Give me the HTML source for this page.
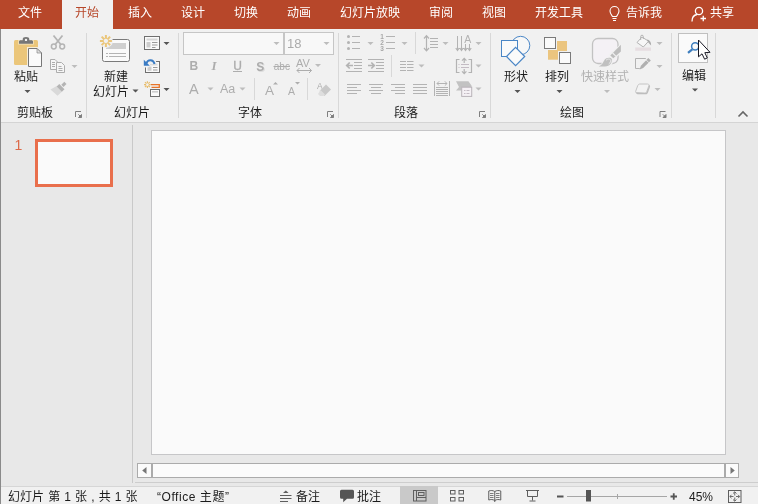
<!DOCTYPE html>
<html lang="zh-CN">
<head>
<meta charset="utf-8">
<title>PowerPoint</title>
<style>
*{margin:0;padding:0;box-sizing:border-box}
html,body{width:758px;height:504px;overflow:hidden;background:#e8e8e8}
body{position:relative;font-family:"Liberation Sans","Noto Sans CJK SC",sans-serif;font-size:12px;color:#262626}
.abs,.abs *{position:absolute}
#tabs{z-index:2;position:absolute;left:0;top:0;width:758px;height:29px;background:#b7472a}
#tabs .t{position:absolute;top:4px;height:18px;line-height:18px;color:#fff;font-size:12px;white-space:nowrap}
#tabs .act{position:absolute;left:62px;top:0;width:51px;height:29px;background:#f1f1f1}
#ribbon{position:absolute;left:0;top:28px;width:758px;height:95px;background:#f1f1f1;border-bottom:1px solid #d4d4d4}
.lbl{position:absolute;font-size:12px;line-height:14px;white-space:nowrap;color:#1c1c1c}
.dis{color:#b1b1b1}
.sep{position:absolute;width:1px;background:#d8d8d8}
svg{position:absolute;overflow:visible}
#left{position:absolute;left:0;top:123px;width:132px;height:363px;background:#e8e8e8}
#edge{position:absolute;left:0;top:0;width:1px;height:504px;background:#8a8a8a}
#status{position:absolute;left:0;top:486px;width:758px;height:18px;background:#f1f1f1;border-top:1px solid #d6d6d6}
#status .lbl{top:3px;line-height:14px}
</style>
</head>
<body>
<div id="app" style="position:absolute;left:0;top:0;width:758px;height:504px;will-change:transform">
<div id="tabs">
  <div class="act"></div>
  <span class="t" style="left:18px">文件</span>
  <span class="t" style="left:75px;color:#b7472a">开始</span>
  <span class="t" style="left:128px">插入</span>
  <span class="t" style="left:181px">设计</span>
  <span class="t" style="left:234px">切换</span>
  <span class="t" style="left:287px">动画</span>
  <span class="t" style="left:340px">幻灯片放映</span>
  <span class="t" style="left:429px">审阅</span>
  <span class="t" style="left:482px">视图</span>
  <span class="t" style="left:535px">开发工具</span>
  <span class="t" style="left:626px">告诉我</span>
  <span class="t" style="left:710px">共享</span>
</div>
<div id="ribbon">
  <!-- group separators -->
  <div class="sep" style="left:86px;top:5px;height:85px"></div>
  <div class="sep" style="left:178px;top:5px;height:85px"></div>
  <div class="sep" style="left:338px;top:5px;height:85px"></div>
  <div class="sep" style="left:490px;top:5px;height:85px"></div>
  <div class="sep" style="left:671px;top:5px;height:85px"></div>
  <div class="sep" style="left:715px;top:5px;height:85px"></div>
  <!-- inner separators -->
  <div class="sep" style="left:254px;top:50px;height:22px"></div>
  <div class="sep" style="left:307px;top:50px;height:22px"></div>
  <div class="sep" style="left:415px;top:4px;height:22px"></div>
  <div class="sep" style="left:391px;top:27px;height:22px"></div>
  <!-- labels -->
  <span class="lbl" style="left:14px;top:42px">粘贴</span>
  <span class="lbl" style="left:17px;top:78px">剪贴板</span>
  <span class="lbl" style="left:104px;top:42px">新建</span>
  <span class="lbl" style="left:93px;top:57px">幻灯片</span>
  <span class="lbl" style="left:114px;top:78px">幻灯片</span>
  <span class="lbl" style="left:238px;top:78px">字体</span>
  <span class="lbl" style="left:394px;top:78px">段落</span>
  <span class="lbl" style="left:504px;top:42px">形状</span>
  <span class="lbl" style="left:545px;top:42px">排列</span>
  <span class="lbl dis" style="left:581px;top:42px">快速样式</span>
  <span class="lbl" style="left:560px;top:78px">绘图</span>
  <span class="lbl" style="left:682px;top:41px">编辑</span>
  <!-- font boxes -->
  <div style="position:absolute;left:183px;top:4px;width:151px;height:23px;background:#f8f8f8;border:1px solid #c6c6c6"></div>
  <div class="sep" style="left:283px;top:4px;width:2px;height:23px;background:#c6c6c6"></div>
  <span class="lbl dis" style="left:287px;top:9px;font-size:13px;color:#ababab">18</span>
  <!-- edit button -->
  <div style="position:absolute;left:678px;top:5px;width:30px;height:30px;background:#fafafa;border:1px solid #c0c0c0"></div>
</div>
<svg id="icons" width="758" height="123" viewBox="0 0 758 123" style="left:0;top:0;z-index:3">
<!-- dropdown arrows: dark -->
<path fill="#555" d="M24.5 90h6l-3 3z M132.5 89.5h6l-3 3z M163.5 42h6l-3 3z M163.5 88h6l-3 3z M514.5 90h6l-3 3z M556.5 90h6l-3 3z M692 88.5h6l-3 3z"/>
<!-- dropdown arrows: disabled -->
<path fill="#bdbdbd" d="M71.5 65h6l-3 3z M273.500 42h6l-3 3z M323.500 42h6l-3 3z M315 64h6l-3 3z M207.5 87.5h6l-3 3z M239.5 87.5h6l-3 3z M367.5 42h6l-3 3z M401.5 42h6l-3 3z M442.5 42h6l-3 3z M475.5 42h6l-3 3z M418.5 64.5h6l-3 3z M475.5 64.5h6l-3 3z M475.5 87.5h6l-3 3z M604 90h6l-3 3z M656.5 42h6l-3 3z M656.5 65h6l-3 3z M654.5 88h6l-3 3z"/>
<!-- dialog launchers -->
<g fill="#808080" stroke="#808080" stroke-width="1">
  <path d="M75.5 117v-5.500h5.500" fill="none"/><path d="M78.3 114.300l3 3M81.5 114.500v3h-3z"/>
  <path d="M327.5 117v-5.500h5.500" fill="none"/><path d="M330.3 114.300l3 3M333.5 114.500v3h-3z"/>
  <path d="M479.5 117v-5.500h5.500" fill="none"/><path d="M482.3 114.300l3 3M485.5 114.500v3h-3z"/>
  <path d="M660 117v-5.500h5.500" fill="none"/><path d="M662.8 114.300l3 3M666 114.500v3h-3z"/>
</g>
<!-- collapse ribbon chevron -->
<path d="M738.5 116.5l4.5-4.5l4.5 4.5" fill="none" stroke="#666" stroke-width="1.6"/>

<!-- PASTE -->
<rect x="14" y="40" width="24" height="25" rx="1.500" fill="#ebc67a"/>
<rect x="18.200" y="40" width="15.600" height="4.600" fill="#f3e3bd"/>
<path d="M19 43.800v-2.600l1 -1h2.700v-0.800a3.300 2.400 0 0 1 6.600 0v0.800h2.700l1 1v2.600z" fill="#777"/>
<circle cx="26" cy="39.900" r="1.200" fill="#f4f4f4"/>
<rect x="27" y="47" width="11" height="18" fill="#f6edd8"/>
<path d="M28.500 48.500h8.500l4.500 4.500v13.500h-13z" fill="#fafafa" stroke="#777" stroke-width="1"/>
<path d="M37 48.500v4.500h4.500z" fill="#e0e0e0" stroke="#777" stroke-width="0.600"/>
<!-- scissors -->
<g fill="none" stroke="#b4b4b4" stroke-width="1.5">
  <circle cx="53.800" cy="46.500" r="2.400"/>
  <circle cx="62.200" cy="46.500" r="2.400"/>
  <path d="M55.200 44.500L62.500 35.500M60.800 44.500L53.500 35.500" stroke-width="1.8"/>
</g>
<!-- copy -->
<g fill="#f6f6f6" stroke="#adadad" stroke-width="1">
  <path d="M50.500 59.500h4.500l2.500 2.500v7.500h-7z"/>
  <path d="M56.500 62.500h5l3 3v7h-8z"/>
  <path d="M52 62.500h3M52 64.500h3M52 66.500h3M58.500 66.500h3M58.500 68.500h4M58.500 70.500h4" fill="none"/>
</g>
<!-- format painter -->
<g>
  <path d="M56.800 86l5.400 5.500l-4.700 4.300l-7 -6.400z" fill="#d9d9d9"/>
  <path d="M59.300 84l5.200 5.200l-2.600 2.600l-5.200 -5.200z" fill="#b4b4b4"/>
  <path d="M64.300 81.700l2.200 2.200l-3 3l-2.200 -2.200z" fill="#b4b4b4"/>
</g>

<!-- NEW SLIDE -->
<rect x="102.500" y="39.500" width="27" height="22" rx="2" fill="#fafafa" stroke="#7a7a7a"/>
<rect x="106" y="43" width="20" height="6" fill="#cfcfcf"/>
<path d="M106 53.500h2M109 53.500h17M106 56.500h2M109 56.500h17" stroke="#b4b4b4" stroke-width="1" fill="none"/>
<circle cx="105.9" cy="40.9" r="7" fill="#f1f1f1"/>
<path d="M108.70 40.90L111.90 40.90M107.88 42.88L110.14 45.14M105.90 43.70L105.90 46.90M103.92 42.88L101.66 45.14M103.10 40.90L99.90 40.90M103.92 38.92L101.66 36.66M105.90 38.10L105.90 34.90M107.88 38.92L110.14 36.66" stroke="#ebc67a" stroke-width="2" fill="none"/>
<circle cx="105.9" cy="40.9" r="2.700" fill="none" stroke="#ebc67a" stroke-width="1"/>
<!-- layout -->
<rect x="144.500" y="36.500" width="15" height="13" fill="#fafafa" stroke="#6f6f6f"/>
<rect x="146.500" y="38.500" width="11" height="2" fill="#d6d6d6"/>
<rect x="146.500" y="42" width="4" height="5.500" fill="#cdcdcd"/>
<path d="M152 42.500h5.500M152 45h5.500M152 47.500h3.500" stroke="#9a9a9a" stroke-width="1"/>
<!-- reset -->
<rect x="145.500" y="61.500" width="14" height="11" fill="#fafafa" stroke="#6f6f6f"/>
<rect x="150" y="63.500" width="7.500" height="2" fill="#dcdcdc"/>
<rect x="147.500" y="66.500" width="4" height="4.300" fill="#cdcdcd"/>
<path d="M153 67.500h4.500M153 70h4.500" stroke="#9a9a9a" stroke-width="1"/>
<path d="M143 58.500h12.500l1 5.500h-6.500l-1.500 3.500h-5.500z" fill="#f1f1f1"/>
<path d="M146.300 63.300c1.600 -4.300 7 -4.300 8.300 0.700" fill="none" stroke="#3b7cc4" stroke-width="2"/>
<path d="M143.800 59.800v6h6z" fill="#3b7cc4"/>
<!-- section -->
<path d="M151 84.600h8.300v2.700h-7.800" fill="none" stroke="#e8742a" stroke-width="1.300"/>
<rect x="150.500" y="89.500" width="9" height="7" fill="#fafafa" stroke="#6f6f6f"/>
<rect x="152" y="91" width="6" height="1.600" fill="#cdcdcd"/>
<path d="M148.70 84.60L150.80 84.60M148.32 85.52L149.80 87.00M147.40 85.90L147.40 88.00M146.48 85.52L145.00 87.00M146.10 84.60L144.00 84.60M146.48 83.68L145.00 82.20M147.40 83.30L147.40 81.20M148.32 83.68L149.80 82.20" stroke="#e8bd6c" stroke-width="1.200" fill="none"/>

<!-- FONT group -->
<g font-family="'Liberation Sans',sans-serif" fill="#adadad">
  <text x="189.500" y="70" font-size="12" font-weight="bold">B</text>
  <text x="211.500" y="70" font-size="13" font-style="italic" font-weight="bold" font-family="'Liberation Serif',serif">I</text>
  <text x="233.300" y="70" font-size="12" stroke="#adadad" stroke-width="0.350">U</text>
  <text x="257.300" y="72.300" font-size="12" font-weight="bold" fill="#dcdcdc">S</text>
  <text x="256.300" y="71" font-size="12" font-weight="bold">S</text>
  <text x="273.800" y="69.500" font-size="10">abc</text>
  <text x="296" y="66.700" font-size="11">AV</text>
  <text x="189" y="93.500" font-size="14.500">A</text>
  <text x="220" y="93" font-size="12.500">Aa</text>
  <text x="265" y="95" font-size="13.500">A</text>
  <text x="288" y="95" font-size="10.500">A</text>
  <text x="317" y="89" font-size="8.500">A</text>
</g>
<g stroke="#adadad" fill="none" stroke-width="1">
  <path d="M233 71.500h9"/>
  <path d="M273.500 66.500h16.500"/>
  <path d="M297 70.500h14.500M299.500 68l-2.500 2.500l2.500 2.500M309 68l2.500 2.500l-2.500 2.500"/>
</g>
<path d="M273 84.500h5l-2.500 -2.500z M295 82h5l-2.500 2.500z" fill="#adadad"/>
<!-- eraser -->
<path d="M326 84.500l5 5l-6.500 6.500l-5-5z" fill="#c9c9c9"/>
<path d="M320.500 90l4.500 4.500l-1.500 1.500h-3.500l-2-2z" fill="#dedede"/>

<!-- PARAGRAPH group -->
<g stroke="#b3b3b3" stroke-width="1" fill="none">
  <!-- bullets -->
  <path d="M352 36.500h8M352 42.500h8M352 48.500h8"/>
  <!-- numbering -->
  <path d="M386 36.500h9M386 42.500h9M386 48.500h9"/>
  <!-- line spacing -->
  <path d="M426.500 36v14.500M424 38.500l2.500 -2.800l2.500 2.800M424 48l2.500 2.800l2.500 -2.800" stroke-width="1.200"/>
  <path d="M430 38.500h8M430 41.500h8M430 44.500h8M430 47.500h8"/>
  <!-- text direction -->
  <path d="M457.500 36v14.500M461.500 36v14.500M465.500 44v6.500M469.500 44v6.500"/>
  <path d="M455.800 48l1.700 2.500l1.700 -2.500M459.800 48l1.700 2.500l1.700 -2.500M463.800 48l1.700 2.500l1.700 -2.500M467.800 48l1.700 2.500l1.700 -2.500" stroke-width="1.200"/>
  <!-- decrease indent -->
  <path d="M346 59.500h16M346 71.500h16M354 62.500h8M354 65.500h8M354 68.500h8"/>
  <path d="M347 65.500h6M349.700 62.500l-3 3l3 3" stroke-width="1.700"/>
  <!-- increase indent -->
  <path d="M368 59.500h16M368 71.500h16M376 62.500h8M376 65.500h8M376 68.500h8"/>
  <path d="M368 65.500h6M371.300 62.500l3 3l-3 3" stroke-width="1.700"/>
  <!-- columns -->
  <path d="M400 61.500h6M400 64.500h6M400 67.500h6M400 70.500h6M407 61.500h6.500M407 64.500h6.500M407 67.500h6.500M407 70.500h6.500"/>
  <!-- align text -->
  <path d="M459.500 59.500h-3v13h3M468.500 59.500h3v13h-3" stroke-width="1.200"/>
  <path d="M464.200 58.500v4.500M462 60.700l2.200 -2.300l2.200 2.300M464.200 69v4.500M462 71.300l2.200 2.300l2.200 -2.300" stroke-width="1.200"/>
  <path d="M458.500 64.500h1M461 64.500h8M458.500 67.500h1M461 67.500h8" stroke="#c4bcc4"/>
  <!-- align left -->
  <path d="M347 84.500h14M347 87.500h10M347 90.500h14M347 93.500h10"/>
  <!-- center -->
  <path d="M369 84.500h14M371 87.500h10M369 90.500h14M371 93.500h10"/>
  <!-- right -->
  <path d="M391 84.500h14M395 87.500h10M391 90.500h14M395 93.500h10"/>
  <!-- justify -->
  <path d="M413 84.500h14M413 87.500h14M413 90.500h14M413 93.500h14"/>
  <!-- distribute -->
  <path d="M434.500 81v15M449.500 81v15M437 83.500h10M439.200 81.300l-2.200 2.200l2.200 2.200M444.800 81.300l2.200 2.200l-2.200 2.200"/>
  <path d="M436 87.500h12M436 89.500h12M436 91.500h12M436 93.500h12M436 95.500h12"/>
</g>
<g fill="#b3b3b3">
  <circle cx="348.500" cy="36.500" r="1.500"/><circle cx="348.500" cy="42.500" r="1.500"/><circle cx="348.500" cy="48.500" r="1.500"/>
</g>
<g font-family="'Liberation Sans',sans-serif" font-size="6.500" fill="#a8a8a8" font-weight="bold">
  <text x="380.300" y="38.800">1</text><text x="380.300" y="44.800">2</text><text x="380.300" y="50.800">3</text>
</g>
<text x="464.300" y="42.800" font-family="'Liberation Sans',sans-serif" font-size="10.500" fill="#b3b3b3">A</text>
<!-- smartart -->
<path d="M456 81.300h12.400l3.100 4.200v2h-10v3.100h-5.500l3 -3.600z" fill="#c2c2c2"/>
<rect x="461.700" y="87.200" width="10" height="9.200" fill="#f5f1f5" stroke="#b9b3b9" stroke-width="1"/>
<path d="M464 90.500h1.500M466.500 90.500h3M464 93.500h1.500M466.500 93.500h3" stroke="#c4bcc4"/>

<!-- DRAWING group -->
<!-- shapes -->
<circle cx="520.600" cy="45.500" r="9.200" fill="#f7f7f7" stroke="#4a86c6" stroke-width="1"/>
<rect x="501.500" y="40.500" width="16" height="16" fill="#fafafa" stroke="#4a86c6" stroke-width="1"/>
<path d="M515.600 47.300l9.100 9.200l-9.100 9.200l-9.100 -9.200z" fill="#fafafa" stroke="#4a86c6" stroke-width="1.200"/>
<!-- arrange -->
<rect x="548" y="41" width="19" height="18.700" fill="#ebc57f"/>
<rect x="543.500" y="36.500" width="13.500" height="13.500" fill="#f1f1f1"/>
<rect x="558" y="51" width="13.500" height="13.500" fill="#f1f1f1"/>
<rect x="544.500" y="37.500" width="11" height="11" fill="#fafafa" stroke="#7a7a7a"/>
<rect x="559.500" y="52.500" width="11" height="11" fill="#fafafa" stroke="#7a7a7a"/>
<!-- quick styles -->
<rect x="592.500" y="38.500" width="25.500" height="25" rx="5.500" fill="#f4f1f5" stroke="#c2c2c2" stroke-width="1.300"/>
<path d="M621.500 43.500v9l-7.500 7l-5.500 -5z" fill="#f1f1f1"/>
<path d="M613 57.500c1.500 3.500 -1 10.500 -8 10.500h-8.500c4 -2 5 -4.500 6.500 -7.500c1.500 -3 8 -5.500 10 -3z" fill="#f1f1f1"/>
<path d="M620.900 44.700v6.700l-7.600 6.900l-3 -2.700z" fill="#bdbdbd"/>
<path d="M612.600 53l3.200 3.200" stroke="#f1f1f1" stroke-width="1.100" fill="none"/>
<path d="M611.800 59c0.700 3 -1.800 7.500 -6.800 7.500h-6.300c3.300 -1.500 4.300 -4 5.800 -6.500c1.500 -2.500 6 -3 7.300 -1z" fill="#c0c0c0"/>
<path d="M606 60.200c1.500 -1.500 4 -1.500 4.700 -0.200c0.500 1 -0.500 3 -2 4" fill="none" stroke="#ececec" stroke-width="0.900"/>
<!-- fill bucket -->
<path d="M641.900 37l6.700 4.200l-5.300 5.800l-6.300 -4.500z" fill="#f7f7f7" stroke="#b3b3b3"/>
<path d="M640.700 40v-3.500a1.300 1.300 0 0 1 2.600 0v2.500" fill="none" stroke="#b3b3b3"/>
<path d="M646.800 39.500c2.800 0.200 4.400 2.300 4.300 6l-3 -3.200z" fill="#a9a9a9"/>
<rect x="635.200" y="47.500" width="15.800" height="3.300" fill="#e6dee1"/>
<!-- outline -->
<path d="M645.800 58.500h-10.300v10h4.300" fill="none" stroke="#b3b3b3"/>
<path d="M648.300 58l2.500 2.500l-7.600 7.600l-3.600 1.300l1.300 -3.600z" fill="#b0b0b0"/><path d="M646 59.800l3 3" stroke="#f1f1f1" stroke-width="0.800"/>
<!-- effects -->
<path d="M640 84h7.500c1.200 0 1.700 0.800 1.300 2l-2 5.500c-0.400 1 -1 1.500 -2 1.500h-7.800c-1.200 0 -1.700 -0.800 -1.300 -1.800l2 -5.500c0.400 -1.200 1.200 -1.700 2.300 -1.700z" fill="#f3f3f3" stroke="#c4c4c4"/>
<path d="M636 92.300c0.300 1.500 1 2 2.300 2h7.200c1.300 0 2 -0.500 2.500 -1.800l2 -5.500c0.200 -1 0.100 -1.800 -0.500 -2.300l-2.700 7c-0.300 0.800 -0.900 1.300 -2 1.300z" fill="#bdbdbd"/>

<!-- EDIT -->
<circle cx="695.200" cy="46.300" r="3.600" fill="#fafafa" stroke="#3e7ebe" stroke-width="1.500"/>
<path d="M692.300 49.300l-4.300 3.500" stroke="#3e7ebe" stroke-width="2.200" fill="none"/>
<!-- mouse cursor -->
<path d="M698.500 40v16.800l3.500 -3l2.600 5.400l2.700 -1.300l-2.500 -5.200l5.200 -0.400z" fill="#fff" stroke="#161622" stroke-width="1" stroke-linejoin="miter"/>

<!-- TAB BAR icons -->
<g fill="none" stroke="#fff" stroke-width="1.100">
  <path d="M612.500 16.500c-1 -1.500 -2.500 -3 -2.500 -5.500a4.500 4.500 0 0 1 9 0c0 2.500 -1.500 4 -2.500 5.500z"/>
  <path d="M612.500 18.500h4M613 20.500h3"/>
  <circle cx="699" cy="11" r="3.600" stroke-width="1.300"/>
  <path d="M692 21.500c0 -4 2 -6.500 5 -7" stroke-width="1.300"/>
  <path d="M700.500 18.500h5.500M703.250 15.700v5.600" stroke-width="1.300"/>
</g>
</svg>
<div id="left"></div>
<span class="lbl" style="left:14.500px;top:138px;font-size:14px;line-height:15px;color:#dd6a48">1</span>
<div id="thumb" style="position:absolute;left:35px;top:139px;width:78px;height:48px;background:#fafafa;border:3px solid #e96f4c"></div>
<div class="sep" style="left:132px;top:125px;height:358px;background:#c9c9c9"></div>
<div id="slide" style="position:absolute;left:151px;top:130px;width:575px;height:325px;background:#fafafa;border:1px solid #c6c6c8"></div>
<div class="sep" style="left:135px;top:482px;width:623px;height:1px;background:#cdcdcd"></div>
<div id="hscroll" style="position:absolute;left:137px;top:463px;width:602px;height:15px;background:#fbfbfb;border:1px solid #ababab"></div>
<div class="sep" style="left:151px;top:463px;width:2px;height:15px;background:#ababab"></div>
<div class="sep" style="left:724px;top:463px;width:2px;height:15px;background:#ababab"></div>
<svg width="758" height="20" viewBox="0 460 758 20" style="left:0;top:460px"><path d="M142.200 470.500l4.300 -3.600v7.200z M734.800 470.500l-4.300 -3.600v7.200z" fill="#777"/></svg>
<div id="status">
<div style="position:absolute;left:400px;top:-1px;width:38px;height:19px;background:#c9c9c9"></div>
<svg width="758" height="18" viewBox="0 486 758 18" style="left:0;top:-1px">
  <g fill="none" stroke="#5e5e5e" stroke-width="1">
    <path d="M280 495.500h11.500M280 498.500h11.500M280 501.500h8"/>
    <path d="M283 493l2.800 -2.500l2.800 2.500z" fill="#5e5e5e" stroke="none"/>
    <!-- normal view -->
    <rect x="413.500" y="490.500" width="12.500" height="10.500"/>
    <path d="M416.500 490.500v10.500M416.500 497.500h9.500" />
    <rect x="418.500" y="492.500" width="5.500" height="3" />
    <!-- sorter -->
    <rect x="450.500" y="490.500" width="4.500" height="3.500"/><rect x="459" y="490.500" width="4.500" height="3.500"/>
    <rect x="450.500" y="497.500" width="4.500" height="3.500"/><rect x="459" y="497.500" width="4.500" height="3.500"/>
    <!-- reading view -->
    <path d="M494.750 491.500c-2 -1.200 -4 -1.200 -6 -0.500v9c2 -0.700 4 -0.700 6 0.500c2 -1.200 4 -1.200 6 -0.500v-9c-2 -0.700 -4 -0.700 -6 0.500zM494.750 491.500v10.500"/>
    <path d="M490 493.500h3.500M490 495.500h3.500M490 497.500h3.500M496 493.500h3.500M496 495.500h3.500M496 497.500h3.500" stroke-width="0.800"/>
    <!-- slideshow -->
    <path d="M526 490.500h13M527.500 491v5.500h10v-5.500M532.500 496.500v4M529.500 501h6"/>
    <!-- zoom -->
    <path d="M567 496.500h100" stroke="#a6a6a6"/>
    <path d="M617.500 494v5" stroke="#a6a6a6"/>
    <path d="M557 496.500h6.500M670.500 496.500h6.500M673.750 493.200v6.600" stroke-width="1.800" stroke="#555"/>
    <!-- fit -->
    <rect x="728.500" y="490.500" width="12.500" height="12"/>
    <path d="M734.750 492v3.500M733 493.500l1.750 -1.700l1.750 1.700M734.750 501v-3.500M733 499.500l1.750 1.700l1.750 -1.700M730 496.500h3.500M731.500 494.800l-1.700 1.700l1.700 1.700M739.500 496.500h-3.500M738 494.800l1.700 1.700l-1.700 1.700" stroke-width="0.900"/>
  </g>
  <rect x="586" y="490" width="5" height="11.500" fill="#555"/>
  <path d="M341.500 489.700h11a1.500 1.500 0 0 1 1.500 1.500v6a1.500 1.500 0 0 1 -1.500 1.500h-5.500l-3.800 3.500v-3.500h-1.700a1.500 1.500 0 0 1 -1.500 -1.500v-6a1.500 1.500 0 0 1 1.500 -1.500z" fill="#555"/>
</svg>
  <span class="lbl" style="left:8px;word-spacing:0.8px">幻灯片 第 1 张 , 共 1 张</span>
  <span class="lbl" style="left:157px;letter-spacing:0.55px">“Office 主题”</span>
  <span class="lbl" style="left:296px">备注</span>
  <span class="lbl" style="left:357px">批注</span>
  <span class="lbl" style="left:689px">45%</span>
</div>
<div id="edge"></div>
</div>
</body>
</html>
